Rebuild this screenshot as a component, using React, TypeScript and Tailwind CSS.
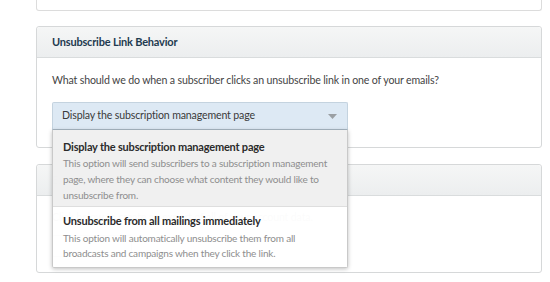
const font = { fontFamily: 'Lato, "Open Sans", sans-serif' };

function CardHeader({ title }: { title: string }) {
  return (
    <div className="h-[31px] flex items-center px-[15px] bg-gradient-to-b from-[#f5f6f6] to-[#eceeef] border-b border-[#d9dcdd] rounded-t-[3px]">
      <span className="text-[11px] font-bold tracking-[-0.2px] text-[#1e3a4f]">{title}</span>
    </div>
  );
}

export default function App() {
  return (
    <div className="w-[550px] h-[282px] bg-white overflow-hidden" style={font}>
      <div className="pl-[36px] w-[542px]">
        <div className="h-[11px] border-x border-b border-[#dcdcdc] rounded-b-[3px]" />

        <div className="mt-[15px] border border-[#d6d8d9] rounded-[3px] relative">
          <CardHeader title="Unsubscribe Link Behavior" />
          <div className="px-[15px] pt-[14px] pb-[17px]">
            <p className="text-[10.6px] tracking-[-0.15px] leading-[16px] text-[#444]">
              What should we do when a subscriber clicks an unsubscribe link in one of your emails?
            </p>
            <div className="relative mt-[14px] w-[296px]">
              <div className="h-[28px] flex items-center justify-between pl-[9px] pr-[10px] bg-[#dde9f4] border border-[#c4d3df] border-b-[#a9b8c4] rounded-t-[2px]">
                <span className="text-[10.6px] tracking-[-0.15px] text-[#3a3a3a]">Display the subscription management page</span>
                <svg width="9" height="5" viewBox="0 0 9 5">
                  <path d="M0 0h9L4.5 5z" fill="#9a9fa3" />
                </svg>
              </div>
              <div className="absolute left-0 top-[28px] w-[296px] z-10 border border-[#c9c9c9] border-t-0 rounded-b-[2px] shadow-[0_1px_4px_rgba(0,0,0,0.25)] bg-white/90">
                <div className="bg-[#efefef]/95 px-[10px] pt-[9px] pb-[3px] border-b border-[#dedede]">
                  <div className="text-[11px] tracking-[-0.2px] font-bold text-[#2b2b2b] leading-[16px]">
                    Display the subscription management page
                  </div>
                  <div className="text-[10px] tracking-[-0.2px] leading-[16px] text-[#8e8e8e]">
                    This option will send subscribers to a subscription management page, where they can choose what content they would like to unsubscribe from.
                  </div>
                </div>
                <div className="px-[10px] pt-[6px] pb-[6px]">
                  <div className="text-[11px] tracking-[-0.2px] font-bold text-[#2b2b2b] leading-[16px]">
                    Unsubscribe from all mailings immediately
                  </div>
                  <div className="text-[10px] tracking-[-0.2px] leading-[15px] text-[#8e8e8e] mt-[2px]">
                    This option will automatically unsubscribe them from all broadcasts and campaigns when they click the link.
                  </div>
                </div>
              </div>
            </div>
          </div>
        </div>

        <div className="mt-[16px] h-[109px] border border-[#d6d8d9] rounded-[3px]">
          <CardHeader title="Export Account Data" />
          <div className="px-[15px] pt-[13px]">
            <p className="text-[10.6px] tracking-[-0.15px] leading-[16px] text-[#dadada]">
              Click below to create an export of all of your account data.
            </p>
            <div className="mt-[10px] w-[80px] h-[22px] border border-[#e6e6e6] rounded-[2px]" />
          </div>
        </div>
      </div>
    </div>
  );
}
